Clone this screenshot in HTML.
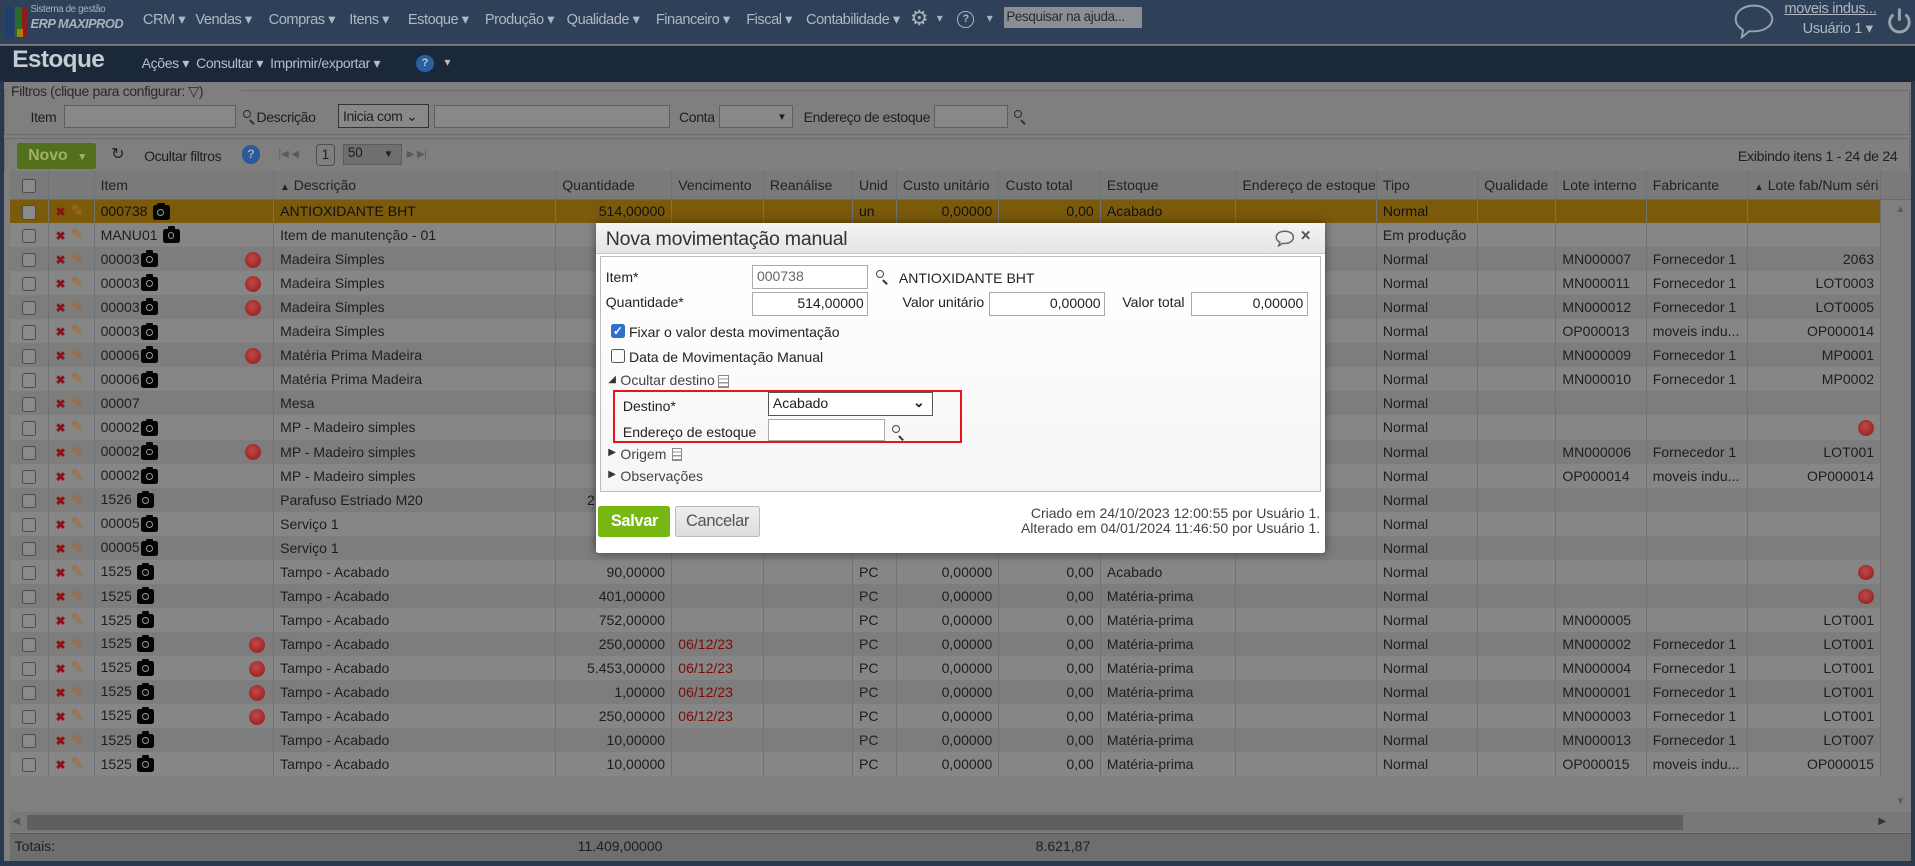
<!DOCTYPE html>
<html><head><meta charset="utf-8"><style>
html,body{margin:0;padding:0;background:#7f7f7f;overflow:hidden;width:1915px;height:866px}
#w{zoom:1.22130;width:1568px;height:709px;position:relative;font-family:"Liberation Sans",sans-serif;font-size:11.5px;color:#1e1e1e;background:#7f7f7f;overflow:hidden}
.a{position:absolute;white-space:nowrap}
.nar{font-family:"Liberation Sans",sans-serif;letter-spacing:-0.3px}
#top{left:0;top:0;width:1568px;height:36px;background:#2e4159}
#hdr{left:0;top:37px;width:1568px;height:29px;background:#1b2839;border-top:1px solid #6b6b6b}
.inp{position:absolute;background:#888;border:1px solid #5e5e5e;box-sizing:border-box;white-space:nowrap;overflow:hidden}
table{border-collapse:collapse;table-layout:fixed;position:absolute;left:8px;top:140px;width:1532px}
td{height:19.7px;padding:0 5px;border-right:1px solid #717171;white-space:nowrap;overflow:hidden;box-sizing:border-box;font-size:11.5px}
tr.h td{height:23px;background:#7a7a7a;border-bottom:1px solid #6a6a6a;color:#222}
tr.l td{background:#868686}
tr.d td{background:#7d7d7d}
tr.s td{background:#7c5a0c;color:#111}
.r{text-align:right}
.cb{display:inline-block;width:10px;height:10px;border:1px solid #4c4c4c;border-radius:2px;background:#8a8a8a;vertical-align:middle}
.x{color:#8a1414;font-size:10px;font-weight:bold}
.p{color:#a8692a;font-size:13px;margin-left:4px}
.cam{display:inline-block;width:14px;height:12px;background:#050505;border-radius:2px;vertical-align:middle;position:relative;margin-left:1px}
.cam:before{content:"";position:absolute;left:4px;top:3px;width:4px;height:4px;border:1.3px solid #9a9a9a;border-radius:50%}
.cam:after{content:"";position:absolute;left:4px;top:-2px;width:6px;height:3px;background:#050505;border-radius:1px 1px 0 0}
.dot{display:inline-block;width:13px;height:13px;border-radius:50%;background:radial-gradient(circle at 45% 40%,#c04848,#8e1a1a);vertical-align:middle}
.red{color:#7d0a0a}
#dlg{left:488px;top:183px;width:597px;height:270px;background:#fff;box-shadow:0 0 8px rgba(0,0,0,.5);border-radius:2px}
#dlg .lb{font-size:11.5px;color:#222}
.di{position:absolute;background:#fff;border:1px solid #aaa;box-sizing:border-box;font-size:11.5px;padding:1px 3px;height:20px;line-height:16px;white-space:nowrap}
.mag{position:absolute;width:7px;height:7px;border:1.5px solid #333;border-radius:50%}
.mag:after{content:"";position:absolute;left:6px;top:7px;width:2px;height:5px;background:#333;transform:rotate(-45deg)}
.ml{font-size:12px;color:#aeb7c2;top:9px;letter-spacing:-0.4px}
</style></head><body><div id="w">

<!-- top bar -->
<div class="a" id="top"></div>
<div class="a" style="left:5px;top:6px;width:6px;height:24px;background:#1c3f6e"></div>
<div class="a" style="left:12px;top:6px;width:6px;height:24px;background:#2a6a2a"></div>
<div class="a" style="left:18px;top:6px;width:4px;height:24px;background:#8a1e1e"></div>
<div class="a" style="left:14px;top:24px;width:5px;height:6px;background:#a57f12"></div>
<div class="a" style="left:25px;top:3px;font-size:8px;color:#a9b2bd;letter-spacing:-0.3px">Sistema de gestão</div>
<div class="a" style="left:25px;top:13px;font-size:10.5px;color:#a9b2bd;font-weight:bold;font-style:italic;letter-spacing:-0.4px">ERP MAXIPROD</div>
<div class="a ml" style="left:117px">CRM ▾</div>
<div class="a ml" style="left:160px">Vendas ▾</div>
<div class="a ml" style="left:220px">Compras ▾</div>
<div class="a ml" style="left:286px">Itens ▾</div>
<div class="a ml" style="left:334px">Estoque ▾</div>
<div class="a ml" style="left:397px">Produção ▾</div>
<div class="a ml" style="left:464px">Qualidade ▾</div>
<div class="a ml" style="left:537px">Financeiro ▾</div>
<div class="a ml" style="left:611px">Fiscal ▾</div>
<div class="a ml" style="left:660px">Contabilidade ▾</div>
<div class="a" style="left:745px;top:5px;font-size:17px;color:#a9b2bd">⚙</div>
<div class="a" style="left:767px;top:9px;font-size:10px;color:#a9b2bd">▾</div>
<div class="a" style="left:784px;top:9px;width:12px;height:12px;border:1.5px solid #a9b2bd;border-radius:50%;font-size:9px;color:#a9b2bd;text-align:center;line-height:12px;font-weight:bold">?</div>
<div class="a" style="left:808px;top:9px;font-size:10px;color:#a9b2bd">▾</div>
<div class="a" style="left:822px;top:6px;width:113px;height:17px;background:#8a8f96;color:#2a2a2a;font-size:11px;line-height:17px;padding-left:2px;box-sizing:border-box;letter-spacing:-0.3px">Pesquisar na ajuda...</div>
<svg class="a" style="left:1418px;top:2px" width="36" height="30"><path d="M18 3C9 3 3 8 3 14c0 4 3 7 6 9l-1 6 6-5c1 0 3 0 4 0 9 0 15-5 15-10S27 3 18 3z" fill="none" stroke="#99a2ac" stroke-width="1.6"/></svg>
<div class="a" style="left:1461px;top:1px;font-size:12px;color:#aeb7c2;text-decoration:underline;letter-spacing:-0.3px">moveis indus...</div>
<div class="a" style="left:1476px;top:16px;font-size:12px;color:#aeb7c2;letter-spacing:-0.3px">Usuário 1 ▾</div>
<svg class="a" style="left:1544px;top:5px" width="22" height="24"><path d="M6 7a8 8 0 1 0 10 0M11 2v10" fill="none" stroke="#99a2ac" stroke-width="2.4"/></svg>

<!-- header -->
<div class="a" id="hdr"></div>
<div class="a" style="left:10px;top:38px;font-size:20px;font-weight:bold;color:#c6cbd1;letter-spacing:-0.5px">Estoque</div>
<div class="a" style="left:116px;top:45px;font-size:11.5px;color:#b8bec6;letter-spacing:-0.3px">Ações ▾ &nbsp;Consultar ▾ &nbsp;Imprimir/exportar ▾</div>
<div class="a" style="left:341px;top:45px;width:14px;height:14px;border-radius:50%;background:#2a5fa0;color:#bcc;font-size:9px;text-align:center;line-height:14px;font-weight:bold">?</div>
<div class="a" style="left:364px;top:45px;font-size:10px;color:#b8bec6">▾</div>

<!-- filters -->
<div class="a" style="left:3px;top:74px;width:1559px;height:36px;border:1px solid #6c6c6c;border-top:none"></div>
<div class="a" style="left:3px;top:74px;width:3px;border-top:1px solid #6c6c6c"></div>
<div class="a" style="left:197px;top:74px;width:1365px;border-top:1px solid #6c6c6c"></div>
<div class="a nar" style="left:9px;top:68px;font-size:11.5px;color:#2a2a2a">Filtros (clique para configurar: ▽)</div>
<div class="a nar" style="left:25px;top:89px;font-size:11.5px">Item</div>
<div class="inp" style="left:52px;top:86px;width:141px;height:19px"></div>
<div class="mag" style="left:199px;top:90px;border-color:#2a2a2a;width:5px;height:5px"></div>
<div class="a nar" style="left:210px;top:89px;font-size:11.5px">Descrição</div>
<div class="inp" style="left:277px;top:85px;width:74px;height:20px;border-color:#333;font-size:11.5px;padding:3px 3px;letter-spacing:-0.3px">Inicia com ⌄</div>
<div class="inp" style="left:355px;top:86px;width:194px;height:19px"></div>
<div class="a nar" style="left:556px;top:89px;font-size:11.5px">Conta</div>
<div class="inp" style="left:589px;top:86px;width:60px;height:19px;font-size:8px;text-align:right;padding:5px 4px">▼</div>
<div class="a nar" style="left:658px;top:89px;font-size:11.5px">Endereço de estoque</div>
<div class="inp" style="left:765px;top:86px;width:60px;height:19px"></div>
<div class="mag" style="left:830px;top:90px;border-color:#2a2a2a;width:5px;height:5px"></div>

<!-- toolbar -->
<div class="a" style="left:3px;top:113px;width:1559px;height:27px;border:1px solid #6c6c6c;border-bottom:none"></div>
<div class="a" style="left:14px;top:117px;width:65px;height:21px;background:#52701c;border-radius:2px;color:#9fb06a;font-weight:bold;font-size:13px;line-height:21px;padding-left:9px;box-sizing:border-box">Novo <span style="font-size:9px;margin-left:6px">▾</span></div>
<div class="a" style="left:91px;top:118px;font-size:13px;color:#222">↻</div>
<div class="a nar" style="left:118px;top:121px;font-size:11.5px">Ocultar filtros</div>
<div class="a" style="left:198px;top:119px;width:15px;height:15px;border-radius:50%;background:#2a5a9a;color:#aab;font-size:10px;text-align:center;line-height:15px;font-weight:bold">?</div>
<div class="a" style="left:228px;top:122px;font-size:8px;color:#5a5a5a">|◀ ◀</div>
<div class="a" style="left:259px;top:118px;width:15px;height:18px;border:1px solid #4c4c4c;border-radius:3px;font-size:11px;text-align:center;line-height:16px;box-sizing:border-box">1</div>
<div class="a" style="left:281px;top:118px;width:48px;height:17px;background:#6f6f6f;border:1px solid #5c5c5c;box-sizing:border-box;font-size:11px;padding-left:3px;line-height:13px">50 <span style="font-size:8px;margin-left:14px">▼</span></div>
<div class="a" style="left:333px;top:122px;font-size:8px;color:#5a5a5a">▶ ▶|</div>
<div class="a" style="left:1423px;top:121px;font-size:11.5px;letter-spacing:-0.2px">Exibindo itens 1 - 24 de 24</div>

<!-- grid frame -->
<div class="a" style="left:8px;top:140px;width:1557px;height:526px;background:#7f7f7f"></div>
<div class="a" style="left:1540px;top:140px;width:25px;height:23px;background:#7a7a7a;border-bottom:1px solid #6a6a6a"></div>
<div class="a" style="left:1552px;top:167px;font-size:8px;color:#5a5a5a">▲</div>
<div class="a" style="left:1552px;top:652px;font-size:8px;color:#5a5a5a">▼</div>

<table>
<colgroup><col style="width:32px"><col style="width:37px"><col style="width:147px"><col style="width:231px"><col style="width:95px"><col style="width:75px"><col style="width:73px"><col style="width:36px"><col style="width:84px"><col style="width:83px"><col style="width:111px"><col style="width:115px"><col style="width:83px"><col style="width:64px"><col style="width:74px"><col style="width:83px"><col style="width:109px"></colgroup>
<tr class="h"><td style="text-align:center"><span class="cb"></span></td><td></td><td>Item</td><td><span style="font-size:8px">▲</span> Descrição</td><td>Quantidade</td><td>Vencimento</td><td>Reanálise</td><td>Unid</td><td>Custo unitário</td><td>Custo total</td><td>Estoque</td><td>Endereço de estoque</td><td>Tipo</td><td>Qualidade</td><td>Lote interno</td><td>Fabricante</td><td><span style="font-size:8px">▲</span> Lote fab/Num séri</td></tr>
<tr class="s"><td style="text-align:center"><span class="cb"></span></td><td><span class="x">✖</span><span class="p">✎</span></td><td>000738 <span class="cam"></span></td><td>ANTIOXIDANTE BHT</td><td class="r">514,00000</td><td></td><td></td><td>un</td><td class="r">0,00000</td><td class="r">0,00</td><td>Acabado</td><td></td><td>Normal</td><td></td><td></td><td></td><td></td></tr>
<tr class="l"><td style="text-align:center"><span class="cb"></span></td><td><span class="x">✖</span><span class="p">✎</span></td><td>MANU01 <span class="cam"></span></td><td>Item de manutenção - 01</td><td></td><td></td><td></td><td></td><td></td><td></td><td></td><td></td><td>Em produção</td><td></td><td></td><td></td><td></td></tr>
<tr class="d"><td style="text-align:center"><span class="cb"></span></td><td><span class="x">✖</span><span class="p">✎</span></td><td>00003<span class="cam"></span><span class="dot" style="margin-left:71px"></span></td><td>Madeira Simples</td><td></td><td></td><td></td><td></td><td></td><td></td><td></td><td></td><td>Normal</td><td></td><td>MN000007</td><td>Fornecedor 1</td><td class="r">2063</td></tr>
<tr class="l"><td style="text-align:center"><span class="cb"></span></td><td><span class="x">✖</span><span class="p">✎</span></td><td>00003<span class="cam"></span><span class="dot" style="margin-left:71px"></span></td><td>Madeira Simples</td><td></td><td></td><td></td><td></td><td></td><td></td><td></td><td></td><td>Normal</td><td></td><td>MN000011</td><td>Fornecedor 1</td><td class="r">LOT0003</td></tr>
<tr class="d"><td style="text-align:center"><span class="cb"></span></td><td><span class="x">✖</span><span class="p">✎</span></td><td>00003<span class="cam"></span><span class="dot" style="margin-left:71px"></span></td><td>Madeira Simples</td><td></td><td></td><td></td><td></td><td></td><td></td><td></td><td></td><td>Normal</td><td></td><td>MN000012</td><td>Fornecedor 1</td><td class="r">LOT0005</td></tr>
<tr class="l"><td style="text-align:center"><span class="cb"></span></td><td><span class="x">✖</span><span class="p">✎</span></td><td>00003<span class="cam"></span></td><td>Madeira Simples</td><td></td><td></td><td></td><td></td><td></td><td></td><td></td><td></td><td>Normal</td><td></td><td>OP000013</td><td>moveis indu...</td><td class="r">OP000014</td></tr>
<tr class="d"><td style="text-align:center"><span class="cb"></span></td><td><span class="x">✖</span><span class="p">✎</span></td><td>00006<span class="cam"></span><span class="dot" style="margin-left:71px"></span></td><td>Matéria Prima Madeira</td><td></td><td></td><td></td><td></td><td></td><td></td><td></td><td></td><td>Normal</td><td></td><td>MN000009</td><td>Fornecedor 1</td><td class="r">MP0001</td></tr>
<tr class="l"><td style="text-align:center"><span class="cb"></span></td><td><span class="x">✖</span><span class="p">✎</span></td><td>00006<span class="cam"></span></td><td>Matéria Prima Madeira</td><td></td><td></td><td></td><td></td><td></td><td></td><td></td><td></td><td>Normal</td><td></td><td>MN000010</td><td>Fornecedor 1</td><td class="r">MP0002</td></tr>
<tr class="d"><td style="text-align:center"><span class="cb"></span></td><td><span class="x">✖</span><span class="p">✎</span></td><td>00007</td><td>Mesa</td><td></td><td></td><td></td><td></td><td></td><td></td><td></td><td></td><td>Normal</td><td></td><td></td><td></td><td></td></tr>
<tr class="l"><td style="text-align:center"><span class="cb"></span></td><td><span class="x">✖</span><span class="p">✎</span></td><td>00002<span class="cam"></span></td><td>MP - Madeiro simples</td><td></td><td></td><td></td><td></td><td></td><td></td><td></td><td></td><td>Normal</td><td></td><td></td><td></td><td class="r"><span class="dot"></span></td></tr>
<tr class="d"><td style="text-align:center"><span class="cb"></span></td><td><span class="x">✖</span><span class="p">✎</span></td><td>00002<span class="cam"></span><span class="dot" style="margin-left:71px"></span></td><td>MP - Madeiro simples</td><td></td><td></td><td></td><td></td><td></td><td></td><td></td><td></td><td>Normal</td><td></td><td>MN000006</td><td>Fornecedor 1</td><td class="r">LOT001</td></tr>
<tr class="l"><td style="text-align:center"><span class="cb"></span></td><td><span class="x">✖</span><span class="p">✎</span></td><td>00002<span class="cam"></span></td><td>MP - Madeiro simples</td><td></td><td></td><td></td><td></td><td></td><td></td><td></td><td></td><td>Normal</td><td></td><td>OP000014</td><td>moveis indu...</td><td class="r">OP000014</td></tr>
<tr class="d"><td style="text-align:center"><span class="cb"></span></td><td><span class="x">✖</span><span class="p">✎</span></td><td>1526 <span class="cam"></span></td><td>Parafuso Estriado M20</td><td class="r">2.000,00000</td><td></td><td></td><td></td><td></td><td></td><td></td><td></td><td>Normal</td><td></td><td></td><td></td><td></td></tr>
<tr class="l"><td style="text-align:center"><span class="cb"></span></td><td><span class="x">✖</span><span class="p">✎</span></td><td>00005<span class="cam"></span></td><td>Serviço 1</td><td></td><td></td><td></td><td></td><td></td><td></td><td></td><td></td><td>Normal</td><td></td><td></td><td></td><td></td></tr>
<tr class="d"><td style="text-align:center"><span class="cb"></span></td><td><span class="x">✖</span><span class="p">✎</span></td><td>00005<span class="cam"></span></td><td>Serviço 1</td><td></td><td></td><td></td><td></td><td></td><td></td><td></td><td></td><td>Normal</td><td></td><td></td><td></td><td></td></tr>
<tr class="l"><td style="text-align:center"><span class="cb"></span></td><td><span class="x">✖</span><span class="p">✎</span></td><td>1525 <span class="cam"></span></td><td>Tampo - Acabado</td><td class="r">90,00000</td><td></td><td></td><td>PC</td><td class="r">0,00000</td><td class="r">0,00</td><td>Acabado</td><td></td><td>Normal</td><td></td><td></td><td></td><td class="r"><span class="dot"></span></td></tr>
<tr class="d"><td style="text-align:center"><span class="cb"></span></td><td><span class="x">✖</span><span class="p">✎</span></td><td>1525 <span class="cam"></span></td><td>Tampo - Acabado</td><td class="r">401,00000</td><td></td><td></td><td>PC</td><td class="r">0,00000</td><td class="r">0,00</td><td>Matéria-prima</td><td></td><td>Normal</td><td></td><td></td><td></td><td class="r"><span class="dot"></span></td></tr>
<tr class="l"><td style="text-align:center"><span class="cb"></span></td><td><span class="x">✖</span><span class="p">✎</span></td><td>1525 <span class="cam"></span></td><td>Tampo - Acabado</td><td class="r">752,00000</td><td></td><td></td><td>PC</td><td class="r">0,00000</td><td class="r">0,00</td><td>Matéria-prima</td><td></td><td>Normal</td><td></td><td>MN000005</td><td></td><td class="r">LOT001</td></tr>
<tr class="d"><td style="text-align:center"><span class="cb"></span></td><td><span class="x">✖</span><span class="p">✎</span></td><td>1525 <span class="cam"></span><span class="dot" style="margin-left:78px"></span></td><td>Tampo - Acabado</td><td class="r">250,00000</td><td class="red">06/12/23</td><td></td><td>PC</td><td class="r">0,00000</td><td class="r">0,00</td><td>Matéria-prima</td><td></td><td>Normal</td><td></td><td>MN000002</td><td>Fornecedor 1</td><td class="r">LOT001</td></tr>
<tr class="l"><td style="text-align:center"><span class="cb"></span></td><td><span class="x">✖</span><span class="p">✎</span></td><td>1525 <span class="cam"></span><span class="dot" style="margin-left:78px"></span></td><td>Tampo - Acabado</td><td class="r">5.453,00000</td><td class="red">06/12/23</td><td></td><td>PC</td><td class="r">0,00000</td><td class="r">0,00</td><td>Matéria-prima</td><td></td><td>Normal</td><td></td><td>MN000004</td><td>Fornecedor 1</td><td class="r">LOT001</td></tr>
<tr class="d"><td style="text-align:center"><span class="cb"></span></td><td><span class="x">✖</span><span class="p">✎</span></td><td>1525 <span class="cam"></span><span class="dot" style="margin-left:78px"></span></td><td>Tampo - Acabado</td><td class="r">1,00000</td><td class="red">06/12/23</td><td></td><td>PC</td><td class="r">0,00000</td><td class="r">0,00</td><td>Matéria-prima</td><td></td><td>Normal</td><td></td><td>MN000001</td><td>Fornecedor 1</td><td class="r">LOT001</td></tr>
<tr class="l"><td style="text-align:center"><span class="cb"></span></td><td><span class="x">✖</span><span class="p">✎</span></td><td>1525 <span class="cam"></span><span class="dot" style="margin-left:78px"></span></td><td>Tampo - Acabado</td><td class="r">250,00000</td><td class="red">06/12/23</td><td></td><td>PC</td><td class="r">0,00000</td><td class="r">0,00</td><td>Matéria-prima</td><td></td><td>Normal</td><td></td><td>MN000003</td><td>Fornecedor 1</td><td class="r">LOT001</td></tr>
<tr class="d"><td style="text-align:center"><span class="cb"></span></td><td><span class="x">✖</span><span class="p">✎</span></td><td>1525 <span class="cam"></span></td><td>Tampo - Acabado</td><td class="r">10,00000</td><td></td><td></td><td>PC</td><td class="r">0,00000</td><td class="r">0,00</td><td>Matéria-prima</td><td></td><td>Normal</td><td></td><td>MN000013</td><td>Fornecedor 1</td><td class="r">LOT007</td></tr>
<tr class="l"><td style="text-align:center"><span class="cb"></span></td><td><span class="x">✖</span><span class="p">✎</span></td><td>1525 <span class="cam"></span></td><td>Tampo - Acabado</td><td class="r">10,00000</td><td></td><td></td><td>PC</td><td class="r">0,00000</td><td class="r">0,00</td><td>Matéria-prima</td><td></td><td>Normal</td><td></td><td>OP000015</td><td>moveis indu...</td><td class="r">OP000015</td></tr>
</table>

<!-- scrollbars & totals -->
<div class="a" style="left:8px;top:665px;width:1557px;height:16px;background:#787878"></div>
<div class="a" style="left:22px;top:667px;width:1356px;height:13px;background:#5f5f5f"></div>
<div class="a" style="left:10px;top:668px;font-size:8px;color:#555">◀</div>
<div class="a" style="left:1538px;top:668px;font-size:8px;color:#333">▶</div>
<div class="a" style="left:8px;top:682px;width:1557px;height:23px;background:#6e6e6e;border-top:1px solid #5a5a5a"></div>
<div class="a" style="left:12px;top:686px;font-size:11.5px">Totais:</div>
<div class="a" style="left:473px;top:686px;font-size:11.5px">11.409,00000</div>
<div class="a" style="left:848px;top:686px;font-size:11.5px">8.621,87</div>
<div class="a" style="left:0;top:705px;width:1568px;height:4px;background:#2a3a4e"></div>
<div class="a" style="left:0;top:66px;width:3px;height:640px;background:#2a3a4e"></div>
<div class="a" style="left:1565px;top:66px;width:3px;height:640px;background:#2a3a4e"></div>

<!-- dialog -->
<div class="a" id="dlg">
  <div class="a" style="left:0;top:0;width:597px;height:24px;background:linear-gradient(#f4f4f4,#e4e4e4);border-bottom:1px solid #c8c8c8"></div>
  <div class="a" style="left:8px;top:4px;font-size:16px;color:#333;letter-spacing:-0.2px">Nova movimentação manual</div>
  <svg class="a" style="left:556px;top:5px" width="16" height="14"><path d="M8 1C4 1 1 3 1 6c0 2 1 3 3 4l-1 3 3-2h2c4 0 7-2 7-5S12 1 8 1z" fill="none" stroke="#666" stroke-width="1.2"/></svg>
  <div class="a" style="left:577px;top:2px;font-size:14px;font-weight:bold;color:#555">×</div>
  <div class="a" style="left:3px;top:27px;width:591px;height:193px;border:1px solid #bdbdbd;box-sizing:border-box;background:linear-gradient(#fff,#f6f6f6)"></div>
  <div class="a lb" style="left:8px;top:37px">Item*</div>
  <div class="di" style="left:128px;top:34px;width:95px;color:#666">000738</div>
  <div class="mag" style="left:229px;top:38px;width:5px;height:5px;border-color:#444"></div>
  <div class="a lb" style="left:248px;top:38px">ANTIOXIDANTE BHT</div>
  <div class="a lb" style="left:8px;top:58px">Quantidade*</div>
  <div class="di" style="left:128px;top:56px;width:95px;text-align:right">514,00000</div>
  <div class="a lb" style="left:251px;top:58px">Valor unitário</div>
  <div class="di" style="left:322px;top:56px;width:95px;text-align:right">0,00000</div>
  <div class="a lb" style="left:431px;top:58px">Valor total</div>
  <div class="di" style="left:487px;top:56px;width:96px;text-align:right">0,00000</div>
  <div class="a" style="left:12px;top:82px;width:12px;height:12px;background:#2f6fd0;border-radius:2px;color:#fff;font-size:10px;line-height:12px;text-align:center;font-weight:bold">✓</div>
  <div class="a lb" style="left:27px;top:82px">Fixar o valor desta movimentação</div>
  <div class="a" style="left:12px;top:103px;width:10px;height:10px;border:1px solid #555;border-radius:2px"></div>
  <div class="a lb" style="left:27px;top:103px">Data de Movimentação Manual</div>
  <div class="a" style="left:10px;top:123px;font-size:8px;color:#333">◢</div>
  <div class="a lb" style="left:20px;top:122px;color:#444">Ocultar destino</div>
  <div class="a" style="left:100px;top:124px;width:7px;height:9px;border:1px solid #888;background:repeating-linear-gradient(#fff 0 2px,#999 2px 3px)"></div>
  <div class="a" style="left:14px;top:136px;width:286px;height:44px;border:2px solid #e8141c;box-sizing:border-box"></div>
  <div class="a lb" style="left:22px;top:143px">Destino*</div>
  <div class="di" style="left:141px;top:138px;width:135px;border-color:#555">Acabado<span style="position:absolute;right:6px;top:0;font-weight:bold">⌄</span></div>
  <div class="a lb" style="left:22px;top:164px">Endereço de estoque</div>
  <div class="di" style="left:141px;top:160px;width:96px;height:18px"></div>
  <div class="mag" style="left:242px;top:165px;width:5px;height:5px;border-color:#444"></div>
  <div class="a" style="left:10px;top:183px;font-size:8px;color:#333">▶</div>
  <div class="a lb" style="left:20px;top:182px;color:#444">Origem</div>
  <div class="a" style="left:62px;top:184px;width:7px;height:9px;border:1px solid #888;background:repeating-linear-gradient(#fff 0 2px,#999 2px 3px)"></div>
  <div class="a" style="left:10px;top:201px;font-size:8px;color:#333">▶</div>
  <div class="a lb" style="left:20px;top:200px;color:#444">Observações</div>
  <div class="a" style="left:2px;top:231px;width:59px;height:26px;background:#76b712;border-radius:2px;color:#fff;font-weight:bold;font-size:13.5px;line-height:26px;text-align:center;letter-spacing:-0.3px">Salvar</div>
  <div class="a" style="left:65px;top:231px;width:69px;height:26px;background:linear-gradient(#eee,#ddd);border:1px solid #bbb;box-sizing:border-box;border-radius:2px;color:#555;font-size:13.5px;line-height:24px;text-align:center;letter-spacing:-0.3px">Cancelar</div>
  <div class="a lb" style="right:4px;top:231px;text-align:right;line-height:13px;color:#444">Criado em 24/10/2023 12:00:55 por Usuário 1.<br>Alterado em 04/01/2024 11:46:50 por Usuário 1.</div>
</div>

</div></body></html>
